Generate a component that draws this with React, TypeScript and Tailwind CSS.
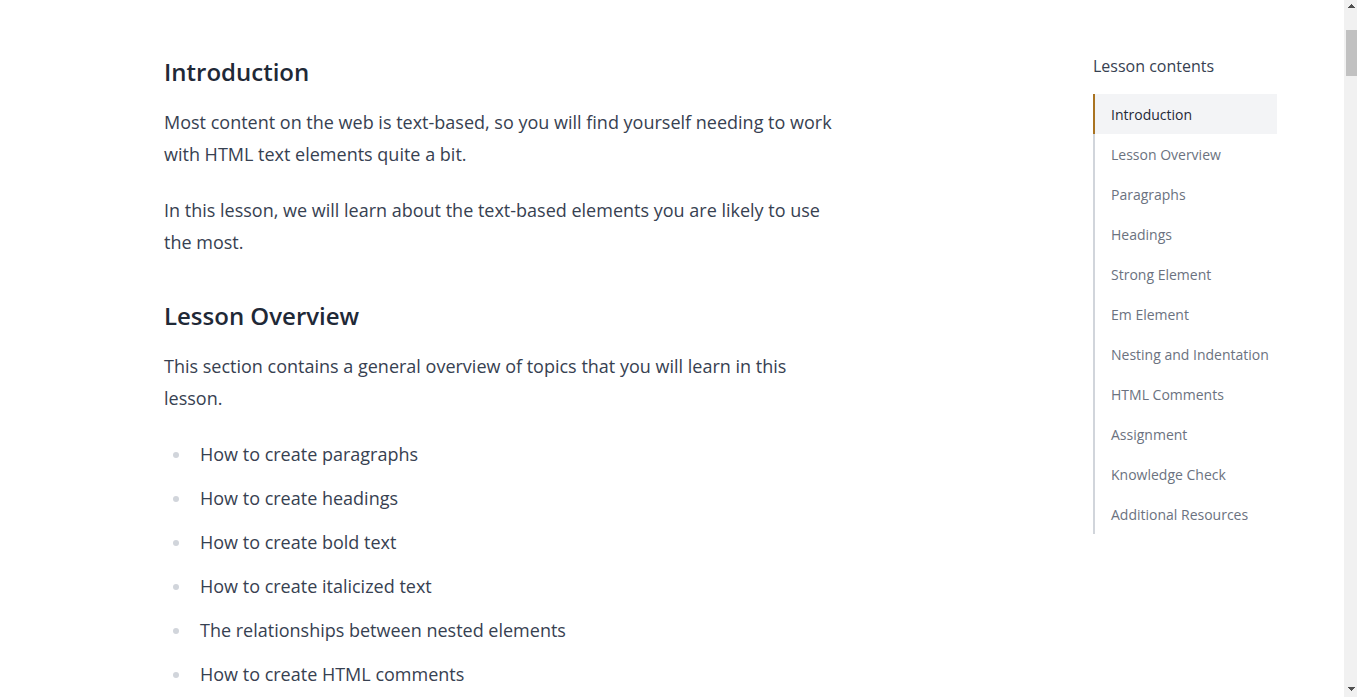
const overviewItems = [
  'How to create paragraphs',
  'How to create headings',
  'How to create bold text',
  'How to create italicized text',
  'The relationships between nested elements',
  'How to create HTML comments',
];

const sections = [
  'Introduction',
  'Lesson Overview',
  'Paragraphs',
  'Headings',
  'Strong Element',
  'Em Element',
  'Nesting and Indentation',
  'HTML Comments',
  'Assignment',
  'Knowledge Check',
  'Additional Resources',
];

const slug = (text: string) => text.toLowerCase().replace(/\s+/g, '-');

function Heading({ children }: { children: string }) {
  return (
    <h2 id={slug(children)} className="mb-4 text-2xl leading-9 font-semibold text-[#1f2937]">
      {children}
    </h2>
  );
}

function LessonContents() {
  return (
    <nav aria-labelledby="contents-title" className="w-46 shrink-0">
      <h3 id="contents-title" className="mb-4 text-base leading-6 text-[#374151]">
        Lesson contents
      </h3>
      <ul>
        {sections.map((name, i) => (
          <li key={name}>
            <a
              href={`#${slug(name)}`}
              aria-current={i === 0 ? 'location' : undefined}
              className={
                i === 0
                  ? 'block border-l-2 border-[#a97321] bg-[#f3f4f6] pt-[11px] pb-[9px] pl-4 text-sm leading-5 whitespace-nowrap text-[#1f2937]'
                  : 'block border-l-2 border-[#d1d5db] pt-[11px] pb-[9px] pl-4 text-sm leading-5 whitespace-nowrap text-[#6b7280]'
              }
            >
              {name}
            </a>
          </li>
        ))}
      </ul>
    </nav>
  );
}

function ScrollTrack() {
  return (
    <div aria-hidden="true" className="flex w-[13px] shrink-0 flex-col items-end bg-[#f1f1f1]">
      <svg className="mb-4 h-3.5 w-[11px]" viewBox="0 0 11 14" fill="#505050" shapeRendering="crispEdges">
        <path d="M5 4h1v1h1v1h1v1h1v1H2V7h1V6h1V5h1z" />
      </svg>
      <div className="h-[46px] w-[11px] bg-[#c1c1c1]" />
      <svg className="mt-auto h-3.5 w-[11px]" viewBox="0 0 11 14" fill="#505050" shapeRendering="crispEdges">
        <path d="M2 4h7v1H8v1H7v1H6v1H5V7H4V6H3V5H2z" />
      </svg>
    </div>
  );
}

export default function App() {
  return (
    <div className="flex min-h-screen bg-white font-['Open_Sans',sans-serif]">
      <main className="flex flex-1 items-start justify-between gap-8 pt-[54px] pr-[67px] pl-41">
        <article className="max-w-[670px] text-lg leading-8 text-[#374151]">
          <section className="mb-10">
            <Heading>Introduction</Heading>
            <p className="mb-6">
              Most content on the web is text-based, so you will find yourself needing to work with HTML text elements
              quite a bit.
            </p>
            <p>
              In this lesson, we will learn about the text-based elements you are likely to use the most.
            </p>
          </section>
          <section>
            <Heading>Lesson Overview</Heading>
            <p className="mb-6">
              This section contains a general overview of topics that you will learn in this lesson.
            </p>
            <ul className="flex flex-col gap-3">
              {overviewItems.map((item) => (
                <li key={item} className="flex items-center pl-[9px]">
                  <span className="mt-0.5 mr-[21px] size-1.5 rounded-full bg-[#d1d5db]" />
                  {item}
                </li>
              ))}
            </ul>
          </section>
        </article>
        <LessonContents />
      </main>
      <ScrollTrack />
    </div>
  );
}
